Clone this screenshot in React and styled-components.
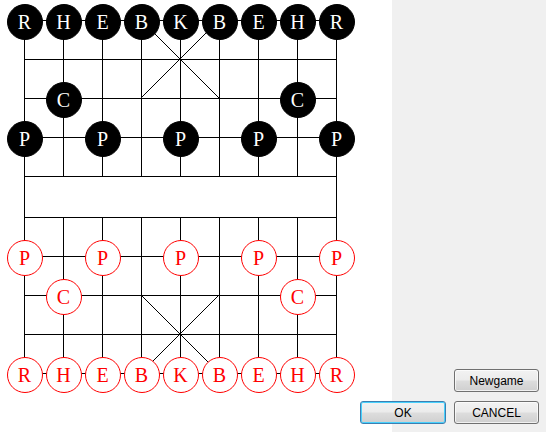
import React from 'react'
import styled, { createGlobalStyle } from 'styled-components'

const GlobalStyle = createGlobalStyle`
  html, body {
    margin: 0;
    padding: 0;
    background: #f0f0f0;
  }
`

const COL_X = Array.from({ length: 9 }, (_, i) => 24 + 39 * i)
const ROW_Y = [20, 59, 98, 137, 176, 217, 256, 295, 334, 373]
const BACK = ['R', 'H', 'E', 'B', 'K', 'B', 'E', 'H', 'R']

const buildPieces = () => {
  const list = []
  BACK.forEach((l, c) => list.push({ side: 'black', label: l, col: c, row: 0 }))
  ;[1, 7].forEach((c) => list.push({ side: 'black', label: 'C', col: c, row: 2 }))
  ;[0, 2, 4, 6, 8].forEach((c) =>
    list.push({ side: 'black', label: 'P', col: c, row: 3 })
  )
  ;[0, 2, 4, 6, 8].forEach((c) =>
    list.push({ side: 'red', label: 'P', col: c, row: 6 })
  )
  ;[1, 7].forEach((c) => list.push({ side: 'red', label: 'C', col: c, row: 7 }))
  BACK.forEach((l, c) => list.push({ side: 'red', label: l, col: c, row: 9 }))
  return list
}

const pieces = buildPieces()

const Grid = () => {
  const left = COL_X[0]
  const right = COL_X[8]
  const top = ROW_Y[0]
  const bottom = ROW_Y[9]
  const h = (v) => v + 0.5
  return (
    <svg width='392' height='432' shapeRendering='crispEdges'>
      <g stroke='#000' strokeWidth='1'>
        {ROW_Y.map((y) => (
          <line key={'r' + y} x1={left} x2={right + 1} y1={h(y)} y2={h(y)} />
        ))}
        {COL_X.map((x, i) =>
          i === 0 || i === 8 ? (
            <line key={'c' + i} x1={h(x)} x2={h(x)} y1={top} y2={bottom + 1} />
          ) : (
            <g key={'c' + i}>
              <line x1={h(x)} x2={h(x)} y1={top} y2={ROW_Y[4] + 1} />
              <line x1={h(x)} x2={h(x)} y1={ROW_Y[5]} y2={bottom + 1} />
            </g>
          )
        )}
        <line x1={COL_X[3]} y1={ROW_Y[0]} x2={COL_X[5]} y2={ROW_Y[2]} />
        <line x1={COL_X[5]} y1={ROW_Y[0]} x2={COL_X[3]} y2={ROW_Y[2]} />
        <line x1={COL_X[3]} y1={ROW_Y[7]} x2={COL_X[5]} y2={ROW_Y[9]} />
        <line x1={COL_X[5]} y1={ROW_Y[7]} x2={COL_X[3]} y2={ROW_Y[9]} />
      </g>
    </svg>
  )
}

const App = () => {
  return (
    <Window>
      <GlobalStyle />
      <Board>
        <Grid />
        {pieces.map((p, i) => (
          <Piece
            key={i}
            $side={p.side}
            style={{ left: COL_X[p.col] - 17.5, top: ROW_Y[p.row] - 16 }}
          >
            {p.label}
          </Piece>
        ))}
      </Board>
      <SidePanel />
      <ButtonGroup>
        <Button $col={2}>Newgame</Button>
        <Button $focused>OK</Button>
        <Button>CANCEL</Button>
      </ButtonGroup>
    </Window>
  )
}

export default App

const Window = styled.div`
  position: relative;
  display: flex;
  width: 546px;
  height: 432px;
  overflow: hidden;
`

const Board = styled.div`
  position: relative;
  width: 392px;
  height: 432px;
  background: #ffffff;
  svg {
    display: block;
  }
`

const SidePanel = styled.div`
  flex: 1;
  background: #f0f0f0;
`

const Piece = styled.div`
  position: absolute;
  box-sizing: border-box;
  width: 36px;
  height: 36px;
  border-radius: 50%;
  display: flex;
  align-items: center;
  justify-content: center;
  font-family: 'Liberation Serif', 'Times New Roman', serif;
  font-size: 20px;
  line-height: 1;
  background: ${(p) => (p.$side === 'black' ? '#000000' : '#ffffff')};
  color: ${(p) => (p.$side === 'black' ? '#ffffff' : '#ff0000')};
  border: 1px solid ${(p) => (p.$side === 'black' ? '#000000' : '#ff0000')};
`

const ButtonGroup = styled.div`
  position: absolute;
  right: 7px;
  bottom: 8px;
  display: grid;
  grid-template-columns: 86px 85px;
  column-gap: 8px;
  row-gap: 9px;
`

const Button = styled.button`
  grid-column: ${(p) => p.$col || 'auto'};
  box-sizing: border-box;
  height: 23px;
  padding: 0;
  font-family: 'Liberation Sans', Arial, sans-serif;
  font-size: 12px;
  color: #000;
  border-radius: 3px;
  border: 1px solid ${(p) => (p.$focused ? '#3c7fb1' : '#707070')};
  background: linear-gradient(
    #f2f2f2 0%,
    #ebebeb 48%,
    #dddddd 52%,
    #cfcfcf 100%
  );
  box-shadow: inset 0 0 0 1px
    ${(p) => (p.$focused ? '#48d1fd' : 'rgba(255, 255, 255, 0.7)')};
  cursor: pointer;
`
